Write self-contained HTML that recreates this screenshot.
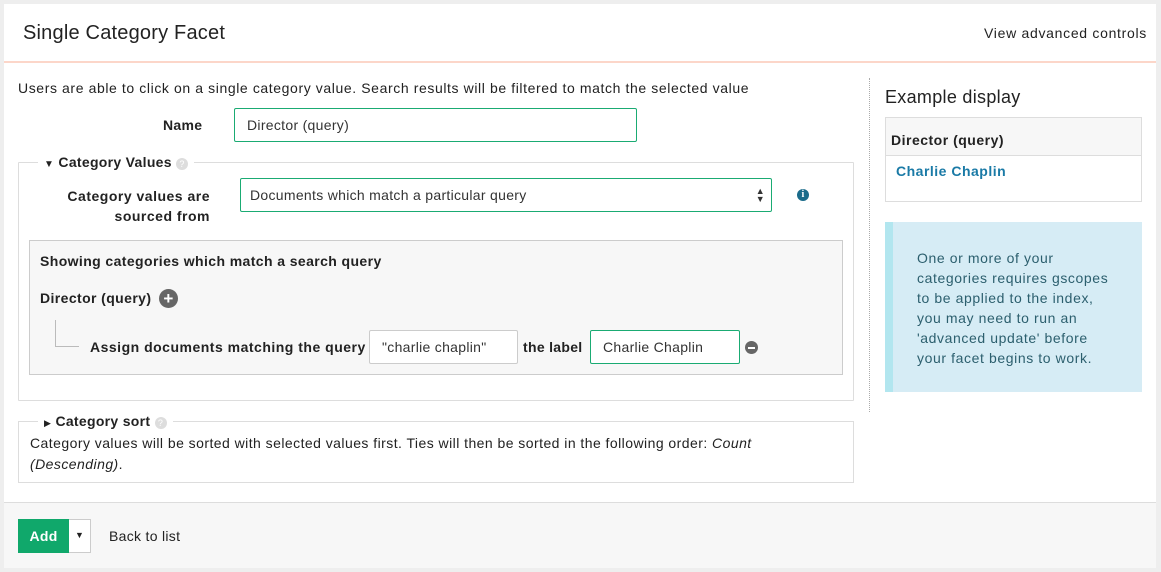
<!DOCTYPE html>
<html><head><style>
*{box-sizing:border-box;margin:0;padding:0}
body{width:1161px;height:572px;background:#eee;font-family:"Liberation Sans",sans-serif;font-size:14px;color:#222;position:relative;overflow:hidden;letter-spacing:0.3px}
.a{position:absolute}
.panel{left:4px;top:4px;width:1152px;height:564px;background:#fff}
.inp{position:absolute;border:1px solid #1aab73;border-radius:2px;background:#fff;padding:0 12px;display:flex;align-items:center;font-size:14px;color:#333}
b{font-weight:bold}
</style></head><body>
<div class="a panel"></div>
<div class="a" style="left:23px;top:22px;font-size:20px;color:#222;letter-spacing:0.2px">Single Category Facet</div>
<div class="a" style="left:984px;top:25px;font-size:14px;letter-spacing:0.7px">View advanced controls</div>
<div class="a" style="left:4px;top:61px;width:1152px;height:2px;background:#fcd6c9"></div>

<div class="a" style="left:18px;top:80px;letter-spacing:0.6px">Users are able to click on a single category value. Search results will be filtered to match the selected value</div>
<div class="a" style="left:163px;top:117px"><b>Name</b></div>
<div class="inp" style="left:234px;top:108px;width:403px;height:34px">Director (query)</div>

<div class="a" style="left:18px;top:162px;width:836px;height:239px;border:1px solid #ddd;border-radius:1px"></div>
<div class="a" style="left:38px;top:154px;background:#fff;padding:0 6px"><span style="font-size:10px">▼</span> <b>Category Values</b> <span style="display:inline-block;width:12px;height:12px;border-radius:50%;background:#ddd;color:#fff;font-size:9px;text-align:center;line-height:12px">?</span></div>
<div class="a" style="left:50px;top:186px;width:160px;text-align:right;line-height:20px;letter-spacing:0.5px"><b>Category values are sourced from</b></div>
<div class="inp" style="left:240px;top:178px;width:532px;height:34px;justify-content:space-between;padding-left:9px;padding-right:6px">Documents which match a particular query<span style="font-size:9px;line-height:8px;color:#333">▲<br>▼</span></div>
<div class="a" style="left:797px;top:189px;width:12px;height:12px;border-radius:50%;background:#1a6b8a;color:#fff;font-size:10px;font-weight:bold;text-align:center;line-height:12px;font-family:'Liberation Serif',serif">i</div>

<div class="a" style="left:29px;top:240px;width:814px;height:135px;background:#f7f7f7;border:1px solid #ccc"></div>
<div class="a" style="left:40px;top:253px;letter-spacing:0.4px"><b>Showing categories which match a search query</b></div>
<div class="a" style="left:40px;top:290px;letter-spacing:0.4px"><b>Director (query)</b></div>
<div class="a" style="left:159px;top:289px;width:19px;height:19px;border-radius:50%;background:#666;color:#fff;font-weight:bold;font-size:17px;text-align:center;line-height:19px">+</div>
<div class="a" style="left:55px;top:320px;width:24px;height:27px;border-left:1px solid #bbb;border-bottom:1px solid #bbb"></div>
<div class="a" style="left:90px;top:339px;letter-spacing:0.5px"><b>Assign documents matching the query</b></div>
<div class="inp" style="left:369px;top:330px;width:149px;height:34px;border-color:#ccc">"charlie chaplin"</div>
<div class="a" style="left:523px;top:339px"><b>the label</b></div>
<div class="inp" style="left:590px;top:330px;width:150px;height:34px">Charlie Chaplin</div>
<div class="a" style="left:745px;top:341px;width:13px;height:13px;border-radius:50%;background:#666"><div style="position:absolute;left:3px;top:5.5px;width:7px;height:2px;background:#fff"></div></div>

<div class="a" style="left:18px;top:421px;width:836px;height:62px;border:1px solid #ddd"></div>
<div class="a" style="left:38px;top:413px;background:#fff;padding:0 6px"><span style="font-size:9px">▶</span> <b>Category sort</b> <span style="display:inline-block;width:12px;height:12px;border-radius:50%;background:#ddd;color:#fff;font-size:9px;text-align:center;line-height:12px">?</span></div>
<div class="a" style="left:30px;top:433px;width:760px;line-height:21px;letter-spacing:0.45px">Category values will be sorted with selected values first. Ties will then be sorted in the following order: <i>Count (Descending)</i>.</div>

<div class="a" style="left:869px;top:78px;height:334px;border-left:1px dotted #aaa"></div>
<div class="a" style="left:885px;top:87px;font-size:18px">Example display</div>
<div class="a" style="left:885px;top:117px;width:257px;height:85px;border:1px solid #ddd"></div>
<div class="a" style="left:886px;top:118px;width:255px;height:38px;background:#f7f7f7;border-bottom:1px solid #ddd"></div>
<div class="a" style="left:891px;top:132px;letter-spacing:0.5px"><b>Director (query)</b></div>
<div class="a" style="left:896px;top:163px;color:#1a7aa6;font-weight:bold;letter-spacing:0.5px">Charlie Chaplin</div>
<div class="a" style="left:885px;top:222px;width:257px;height:170px;background:#d6ecf5;border-left:8px solid #b2e6ef"></div>
<div class="a" style="left:917px;top:248px;width:200px;line-height:20px;color:#2c5f6e;letter-spacing:0.6px">One or more of your categories requires gscopes to be applied to the index, you may need to run an 'advanced update' before your facet begins to work.</div>

<div class="a" style="left:4px;top:502px;width:1152px;height:66px;background:#f7f7f7;border-top:1px solid #ddd"></div>
<div class="a" style="left:18px;top:519px;width:73px;height:34px;border:1px solid #ccc;background:#fff"></div>
<div class="a" style="left:18px;top:519px;width:51px;height:34px;background:#10a86b;color:#fff;font-weight:bold;text-align:center;line-height:34px">Add</div>
<div class="a" style="left:75px;top:530px;font-size:9px">▼</div>
<div class="a" style="left:109px;top:528px">Back to list</div>
</body></html>
